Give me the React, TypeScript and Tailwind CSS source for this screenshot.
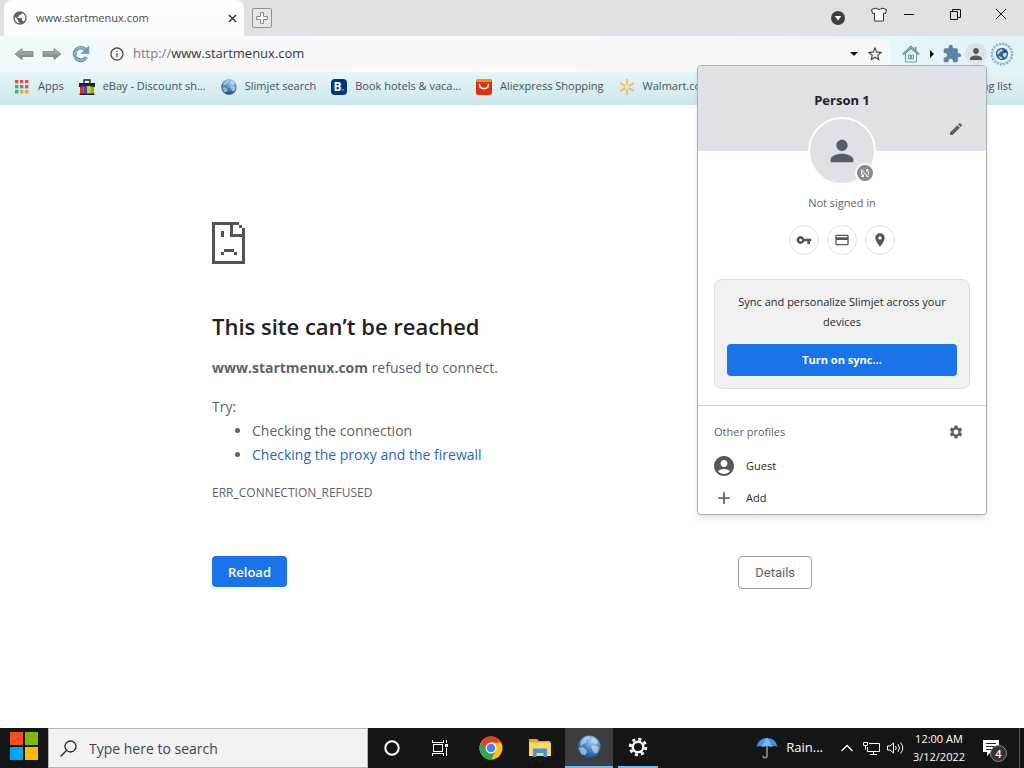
import React from "react";
import {
  MdPerson,
  MdEdit,
  MdVpnKey,
  MdCreditCard,
  MdPlace,
  MdSettings,
  MdAccountCircle,
  MdAdd,
  MdSyncDisabled,
  MdStarBorder,
  MdInfoOutline,
  MdExtension,
  MdPublic,
} from "react-icons/md";

function GlobeIcon({ className, id }: { className: string; id: string }) {
  return (
    <svg viewBox="0 0 24 24" className={className} aria-hidden="true">
      <defs>
        <radialGradient id={id} cx="0.65" cy="0.25" r="0.85">
          <stop offset="0" stopColor="#a9d3f3" />
          <stop offset="0.45" stopColor="#4c87c4" />
          <stop offset="1" stopColor="#123a75" />
        </radialGradient>
      </defs>
      <circle cx="12" cy="12" r="11.5" fill={`url(#${id})`} />
      <path
        d="M3.500 6.500l3.500-4 5-1.500 1 2.500-3.500 1.500-.5 3-3 1-2.500 3zM14 2.500l4 1 3.500 4.500-2.500 1-2.500-1-1.500-3zM1.500 13l4-1 3.500 2.500 1 3-2 2.500-3.500-.5zM14 11l4.500-.5 3.500 2-1.500 5-3 1-2-3z"
        fill="#d6ebf9"
        opacity="0.6"
      />
    </svg>
  );
}

function AppsIcon() {
  const colors = ["#e0533f", "#e0533f", "#e0533f", "#53a45f", "#4b87d9", "#e0533f", "#53a45f", "#e2a93b", "#e2a93b"];
  return (
    <svg viewBox="0 0 16 16" className="size-4 shrink-0" aria-hidden="true">
      {colors.map((c, i) => (
        <rect key={i} x={1 + (i % 3) * 5} y={1 + Math.floor(i / 3) * 5} width="3.400" height="3.400" fill={c} />
      ))}
    </svg>
  );
}

function EbayIcon() {
  return (
    <svg viewBox="0 0 16 16" className="size-4 shrink-0" aria-hidden="true">
      <path d="M5 4V1h6v3" fill="none" stroke="#222" strokeWidth="1.400" />
      <path d="M0 4h16v4H0z" fill="#222" />
      <path d="M1 8l3.500-1v8H1z" fill="#e12b2b" />
      <path d="M4.500 7H8v8H4.500z" fill="#2455c3" />
      <path d="M8 7h3.500v8H8z" fill="#f2b90d" />
      <path d="M11.500 7L15 8v7h-3.500z" fill="#7ab41d" />
      <path d="M.5 14.500h15V16H.5z" fill="#222" />
    </svg>
  );
}

function BookingIcon() {
  return (
    <span className="flex size-4 shrink-0 items-center justify-center rounded-sm bg-[#003580] text-[12px] leading-4 font-bold text-white">
      B<span className="text-[#2f9be8]">.</span>
    </span>
  );
}

function AliIcon() {
  return (
    <svg viewBox="0 0 16 16" className="size-4 shrink-0" aria-hidden="true">
      <rect width="16" height="16" rx="2.500" fill="#e62e04" />
      <path d="M0 2.500A2.500 2.500 0 012.500 0h11A2.500 2.500 0 0116 2.500V3H0z" fill="#f0921e" />
      <path d="M3.500 5.500c.5 5.500 8.500 5.500 9 0" fill="none" stroke="#fff" strokeWidth="1.600" strokeLinecap="round" />
    </svg>
  );
}

function WalmartIcon() {
  return (
    <svg viewBox="0 0 16 16" className="size-4 shrink-0" aria-hidden="true">
      <g stroke="#f3c261" strokeWidth="2.200" strokeLinecap="round">
        <path d="M8 1v4M8 11V15M2 4.500l3.700 2.100M10.300 9.400l3.700 2.100M2 11.500l3.700-2.100M10.300 6.600L14 4.500" />
      </g>
    </svg>
  );
}

function ArrowIcon({ flip, id }: { flip?: boolean; id: string }) {
  return (
    <svg viewBox="0 0 20 14" className="h-[14px] w-5" aria-hidden="true">
      <defs>
        <linearGradient id={id} x1="0" y1="0" x2="0" y2="1">
          <stop offset="0" stopColor="#b9bdbd" />
          <stop offset="1" stopColor="#777b7c" />
        </linearGradient>
      </defs>
      <path
        d={flip ? "M19 7l-7-5.500V4.500H1v5h11v3z" : "M1 7l7-5.500v3h11v5H8v3z"}
        fill={`url(#${id})`}
        stroke="#7d8182"
        strokeWidth="0.800"
      />
    </svg>
  );
}

function ReloadIcon() {
  return (
    <svg viewBox="0 0 18 18" className="size-[18px]" aria-hidden="true">
      <path d="M14.300 12.200A6.300 6.300 0 1 1 13 4.300" fill="none" stroke="#5e86ad" strokeWidth="3.600" />
      <path d="M14.300 12.200A6.300 6.300 0 1 1 13 4.300" fill="none" stroke="#8fb0cf" strokeWidth="1.800" />
      <path d="M16.800 1v7.500H9.300z" fill="#7296bb" stroke="#5e86ad" strokeWidth="0.600" />
    </svg>
  );
}

function HomeIcon() {
  return (
    <svg viewBox="0 0 18 18" className="size-[18px]" aria-hidden="true">
      <path d="M3.500 8.500L9 3.500l5.500 5V17h-11z" fill="#e3f3fb" stroke="#6b9abd" />
      <path d="M12.500 2h2v4l-2-2z" fill="#7c95a5" />
      <path d="M1 9.500L9 2l8 7.500" fill="none" stroke="#6a7c86" strokeWidth="2.200" />
      <path d="M1 9.500L9 2l8 7.500" fill="none" stroke="#b8ccd5" strokeWidth="0.700" />
      <path d="M6.500 10h2v4h-2zM9.500 10h2v4h-2z" fill="#c5e3f3" stroke="#5c88ab" strokeWidth="0.800" />
    </svg>
  );
}

function SlimjetGear() {
  return (
    <svg viewBox="0 0 24 24" className="size-6" aria-hidden="true">
      <circle cx="12" cy="12" r="10.500" fill="#d5ebf7" stroke="#7fadd0" strokeWidth="1.800" strokeDasharray="2 1.300" />
      <circle cx="12" cy="12" r="9.300" fill="#eef7fc" stroke="#86b1d1" strokeWidth="0.700" />
      <circle cx="12" cy="12" r="6.200" fill="#3c6694" />
      <path d="M8 9l3.500-2 1.500 1.500-3 1.500-1.500 2.500-1.500-.5zM13 11.500l3-1 1 2-2 3-2-1.500zM8.500 14l3 1 .5 2-2-.5z" fill="#c5deee" />
      <path d="M14.500 7.500L17 10l-3 .5z" fill="#1f446e" />
    </svg>
  );
}

function SadPage() {
  return (
    <svg viewBox="0 0 33 42" className="h-[42px] w-[33px]" shapeRendering="crispEdges" role="img" aria-label="Page unavailable">
      <path
        fill="#535353"
        d="M0 0h27v3H3v36h27V15H18V3h3v9h9V6h3v36H0zM27 3h3v3h-3zM9 9h3v6H9zM12 27h10v3h-10zM9 30h3v3H9zM22 30h3v3h-3z"
      />
    </svg>
  );
}

function ChromeIcon() {
  return (
    <svg viewBox="0 0 24 24" className="size-6" aria-hidden="true">
      <circle cx="12" cy="12" r="11.500" fill="#fbc116" />
      <path d="M2.040 6.250A11.500 11.500 0 0 0 12 23.500L16.800 14.800 12 12 7.300 14.800z" fill="#2da94f" />
      <path d="M2.040 6.250A11.500 11.500 0 0 1 21.960 6.250L21.900 6.500H12L7.200 15z" fill="#e33b2e" />
      <circle cx="12" cy="12" r="5.500" fill="#fff" />
      <circle cx="12" cy="12" r="4.300" fill="#4285f4" />
    </svg>
  );
}

function ExplorerIcon() {
  return (
    <svg viewBox="0 0 24 20" className="h-5 w-6" aria-hidden="true">
      <path d="M1 1h8l2 2h11v15H1z" fill="#e9a820" />
      <path d="M1 4.500h22V18H1z" fill="#fbd768" />
      <path d="M5 19v-8.500h14V19h-3.500v-4h-7v4z" fill="#3f97d3" />
    </svg>
  );
}

function UmbrellaIcon() {
  return (
    <svg viewBox="0 0 22 24" className="h-6 w-[22px]" aria-hidden="true">
      <path d="M11 10v9.500c0 3-4 3-4 .3" fill="none" stroke="#8b949c" strokeWidth="1.600" />
      <path d="M.5 11C1.500 5 6 2 11 2s9.500 3 10.500 9c-2-1.500-4.500-1.500-6 0-2.500-1.500-6.500-1.500-9 0-1.500-1.500-4-1.500-6 0z" fill="#3f93e0" />
      <path d="M6.500 11C7 7 9 3 11 2c2 1 4 5 4.500 9-2.500-1.500-6.500-1.500-9 0z" fill="#72b8f2" />
    </svg>
  );
}

const iconButton = "flex shrink-0 items-center justify-center";

function Bookmark({ icon, label }: { icon: React.ReactNode; label: string }) {
  return (
    <a href="#" className="flex shrink-0 items-center gap-2">
      {icon}
      {label}
    </a>
  );
}

function TabStrip() {
  return (
    <div className="flex h-9 items-center bg-[#dee1e6] pl-1">
      <div className="flex h-9 w-60 items-center rounded-t-lg bg-linear-to-b from-white to-[#f9fdfd] pr-1.5 pl-2">
        <MdPublic className="size-4 text-[#5f6368]" />
        <span className="ml-2 flex-1 text-[11px] text-[#45494d]">www.startmenux.com</span>
        <button aria-label="Close tab" className="flex size-3 items-center justify-center">
          <svg viewBox="0 0 10 10" className="size-[9px]" stroke="#333" strokeWidth="1.600">
            <path d="M1 1l8 8M9 1l-8 8" />
          </svg>
        </button>
      </div>
      <button aria-label="New tab" className="ml-2 flex size-5 items-center justify-center rounded-xs border border-[#909397] bg-[#e3e6ea]">
        <svg viewBox="0 0 14 14" className="size-[14px]">
          <path d="M5.500 1.500h3v4h4v3h-4v4h-3v-4h-4v-3h4z" fill="#fff" stroke="#85888c" />
        </svg>
      </button>
      <div className="flex-1" />
      <button aria-label="Search tabs" className={`${iconButton} size-4`}>
        <svg viewBox="0 0 14 14" className="size-[14px]">
          <circle cx="7" cy="7" r="7" fill="#3c4043" />
          <path d="M3.800 5h6.400L7 9.500z" fill="#fff" />
        </svg>
      </button>
      <button aria-label="Skins" className={`${iconButton} mb-2 ml-[25px] size-4`}>
        <svg viewBox="0 0 16 15" className="h-[15px] w-4">
          <path d="M5 1l-4.500 1.500 1 4 2-.5V14h9V6l2 .5 1-4L11 1c-.6 1.800-5.400 1.800-6 0z" fill="#fff" stroke="#333" />
        </svg>
      </button>
      <button aria-label="Minimize" className={`${iconButton} mb-2 -ml-px h-7 w-[46px]`}>
        <svg viewBox="0 0 10 10" className="size-[10px]" stroke="#111">
          <path d="M0 5.500h10" />
        </svg>
      </button>
      <button aria-label="Restore" className={`${iconButton} mb-2 h-7 w-[46px]`}>
        <svg viewBox="0 0 11 11" className="size-[11px]" fill="none" stroke="#111">
          <path d="M.5 2.500h7v8h-7zM2.500 2.500v-2h8v8h-3" />
        </svg>
      </button>
      <button aria-label="Close" className={`${iconButton} mb-2 h-7 w-[46px]`}>
        <svg viewBox="0 0 12 12" className="size-3" stroke="#111">
          <path d="M1 1l10 10M11 1L1 11" />
        </svg>
      </button>
    </div>
  );
}

function Toolbar() {
  return (
    <div className="flex h-9 items-center bg-linear-to-r from-[#effafc] via-[#fafdfd] to-[#dff3f7] pr-2.5 pl-3.5">
      <button aria-label="Back">
        <ArrowIcon id="arrow-back" />
      </button>
      <button aria-label="Forward" className="ml-2">
        <ArrowIcon id="arrow-forward" flip />
      </button>
      <button aria-label="Reload page" className="ml-2.5">
        <ReloadIcon />
      </button>
      <div className="ml-3 flex h-[30px] flex-1 items-center rounded-md bg-[#f7f8f8] pr-1.5 pl-[7px] text-[13px]">
        <MdInfoOutline className="size-4 text-[#4b4f53]" />
        <label htmlFor="address" className="ml-2 text-[#7a7d80]">
          http://
        </label>
        <input id="address" className="min-w-0 flex-1 bg-transparent text-[#34373a] outline-none" defaultValue="www.startmenux.com" />
        <button aria-label="Address history" className={`${iconButton} size-4`}>
          <svg viewBox="0 0 8 4" className="h-1 w-2">
            <path d="M0 0h8L4 4z" fill="#111" />
          </svg>
        </button>
        <button aria-label="Bookmark this page" className="ml-1">
          <MdStarBorder className="size-[18px] text-[#45494d]" />
        </button>
      </div>
      <button aria-label="Home" className="ml-3">
        <HomeIcon />
      </button>
      <button aria-label="Show more" className={`${iconButton} ml-1 size-4`}>
        <svg viewBox="0 0 4 8" className="h-2 w-1">
          <path d="M0 0v8l4-4z" fill="#111" />
        </svg>
      </button>
      <button aria-label="Extensions" className="ml-0.5">
        <MdExtension className="size-5 text-[#5d83aa]" />
      </button>
      <button aria-label="Profile" className="ml-[3px] flex size-[22px] items-center justify-center rounded-full bg-[#dce4e8]">
        <MdPerson className="size-[18px] text-[#525861]" />
      </button>
      <button aria-label="Slimjet menu" className="ml-[3px]">
        <SlimjetGear />
      </button>
    </div>
  );
}

function BookmarksBar() {
  return (
    <nav className="flex h-[33px] items-center justify-between overflow-hidden bg-linear-to-b from-[#e6f5f8] to-[#cde7ec] pr-3 pb-1 pl-3.5 text-[11px] whitespace-nowrap text-[#45525a]">
      <div className="flex min-w-0 items-center gap-[15px] overflow-hidden">
        <Bookmark icon={<AppsIcon />} label="Apps" />
        <Bookmark icon={<EbayIcon />} label="eBay - Discount sh..." />
        <Bookmark icon={<GlobeIcon id="globe-bookmark" className="size-4" />} label="Slimjet search" />
        <Bookmark icon={<BookingIcon />} label="Book hotels & vaca..." />
        <Bookmark icon={<AliIcon />} label="Aliexpress Shopping" />
        <Bookmark icon={<WalmartIcon />} label="Walmart.com" />
      </div>
      <a href="#">Reading list</a>
    </nav>
  );
}

function ErrorPage() {
  return (
    <main className="flex-1 bg-white">
      <div className="mx-auto max-w-[600px] pt-[117px] text-[14px] leading-6 text-[#5f6368]">
        <SadPage />
        <h1 className="mt-[46px] text-[22px] leading-8 font-semibold text-[#202124]">This site can’t be reached</h1>
        <p className="mt-3.5">
          <strong className="font-bold">www.startmenux.com</strong> refused to connect.
        </p>
        <p className="mt-[15px]">Try:</p>
        <ul className="list-disc pl-10">
          <li>Checking the connection</li>
          <li>
            <a href="#" className="text-[#2b67b8]">
              Checking the proxy and the firewall
            </a>
          </li>
        </ul>
        <p className="mt-4 text-[12px] leading-5">ERR_CONNECTION_REFUSED</p>
        <div className="mt-[53px] flex items-start justify-between">
          <button className="h-[31px] rounded-sm bg-[#1a73e8] px-4 text-[13px] font-semibold text-white">Reload</button>
          <button className="h-[33px] rounded-sm border border-[#9aa0a6] bg-white px-4 font-['Roboto',sans-serif] text-[13px]">Details</button>
        </div>
      </div>
    </main>
  );
}

function ProfileMenu() {
  const round = "flex size-[30px] items-center justify-center rounded-full border border-[#dfe0e2] bg-white text-[#54585c]";
  return (
    <section
      aria-label="Profile"
      className="absolute top-[65px] right-[37px] w-[290px] overflow-hidden rounded-sm border border-[#aeb0b3] bg-white text-[11px] leading-5 text-[#27292c] shadow-md"
    >
      <div className="relative h-[85px] bg-[#dee1e6] pt-6">
        <h2 className="text-center text-[13px] leading-5 font-bold text-[#202124]">Person 1</h2>
        <button aria-label="Edit profile" className="absolute right-[22px] bottom-3.5">
          <MdEdit className="size-4 text-[#5a5e62]" />
        </button>
      </div>
      <div className="relative mx-auto -mt-[34px] flex size-[68px] items-center justify-center rounded-full border-2 border-white bg-[#dee1e6]">
        <MdPerson className="size-[34px] text-[#555c6a]" />
        <span className="absolute -right-px bottom-0 flex size-5 items-center justify-center rounded-full border-2 border-white bg-[#868b90]">
          <MdSyncDisabled className="size-3 text-white" />
        </span>
      </div>
      <p className="mt-2 text-center text-[#5f6368]">Not signed in</p>
      <div className="mt-3 flex justify-center gap-2">
        <button aria-label="Passwords" className={round}>
          <MdVpnKey className="size-4" />
        </button>
        <button aria-label="Payment methods" className={round}>
          <MdCreditCard className="size-4" />
        </button>
        <button aria-label="Addresses" className={round}>
          <MdPlace className="size-4" />
        </button>
      </div>
      <div className="mx-4 mt-6 rounded-lg border border-[#dcdee0] bg-[#f1f1f2] p-3 text-center">
        <p className="px-1">Sync and personalize Slimjet across your devices</p>
        <button className="mt-3 h-8 w-full rounded-sm bg-[#1a73e8] font-bold text-white">Turn on sync...</button>
      </div>
      <div className="mt-4 flex items-center justify-between border-t border-[#cfd1d4] pt-4 pr-[22px] pl-4 text-[#5f6368]">
        <span>Other profiles</span>
        <button aria-label="Manage profiles">
          <MdSettings className="size-4" />
        </button>
      </div>
      <ul className="mt-2">
        <li>
          <button className="flex h-8 w-full items-center gap-2.5 px-3.5">
            <MdAccountCircle className="size-6 text-[#54585c]" />
            Guest
          </button>
        </li>
        <li>
          <button className="flex h-8 w-full items-center gap-3 px-4">
            <MdAdd className="size-5 text-[#54585c]" />
            Add
          </button>
        </li>
      </ul>
    </section>
  );
}

function Taskbar() {
  const task = "flex h-10 w-12 items-center justify-center";
  return (
    <footer className="flex h-10 items-stretch bg-[#151515] text-white">
      <button aria-label="Start" className="flex w-12 items-center justify-center">
        <svg viewBox="0 0 28 28" className="mb-1 size-7">
          <path d="M0 0h13v13H0z" fill="#f25022" />
          <path d="M15 0h13v13H15z" fill="#7fba00" />
          <path d="M0 15h13v13H0z" fill="#00a4ef" />
          <path d="M15 15h13v13H15z" fill="#ffb900" />
        </svg>
      </button>
      <label className="flex w-80 items-center gap-3 border border-[#b4b4b4] bg-[#f2f2f2] pl-[11px]">
        <svg viewBox="0 0 17 17" className="size-[17px]" fill="none" stroke="#222" strokeWidth="1.300">
          <circle cx="10.500" cy="6.500" r="5.500" />
          <path d="M6.500 10.500l-6 6" />
        </svg>
        <input
          aria-label="Search"
          placeholder="Type here to search"
          className="min-w-0 flex-1 bg-transparent text-[14px] outline-none placeholder:text-[#444]"
        />
      </label>
      <button aria-label="Cortana" className={task}>
        <svg viewBox="0 0 16 16" className="size-4">
          <circle cx="8" cy="8" r="6.700" fill="none" stroke="#fff" strokeWidth="2" />
        </svg>
      </button>
      <button aria-label="Task view" className={task}>
        <svg viewBox="0 0 17 16" className="h-4 w-[17px]" fill="none" stroke="#fff" shapeRendering="crispEdges">
          <path d="M1.500 4.500h9v7h-9zM.5 0v2.500h11V0M.5 16v-2.500h11V16M14.500 0v3M14.500 8v8" />
          <path d="M13 4h3v3h-3z" fill="#fff" stroke="none" />
        </svg>
      </button>
      <div className="ml-[3px] flex gap-px">
        <button aria-label="Chrome" className={task}>
          <ChromeIcon />
        </button>
        <button aria-label="File Explorer" className={task}>
          <ExplorerIcon />
        </button>
        <button aria-label="Slimjet" className={`${task} border-b-2 border-[#76b9ed] bg-[#3c3f42]`}>
          <GlobeIcon id="globe-task" className="size-6" />
        </button>
        <button aria-label="Settings" className={`${task} flex-col`}>
          <span className="flex w-10 flex-1 items-center justify-center border-b-2 border-[#76b9ed]">
            <svg viewBox="0 0 20 20" className="size-5" fill="none" stroke="#fff">
              <circle cx="10" cy="10" r="5.300" strokeWidth="2.400" />
              <circle cx="10" cy="10" r="7.800" strokeWidth="2.800" strokeDasharray="3.060 3.066" />
            </svg>
          </span>
        </button>
      </div>
      <div className="ml-auto flex items-center">
        <button className="flex items-center gap-2 text-[13px]">
          <UmbrellaIcon />
          Rain...
        </button>
        <button aria-label="Show hidden icons" className="ml-[18px]">
          <svg viewBox="0 0 12 8" className="h-2 w-3" fill="none" stroke="#fff" strokeWidth="1.300">
            <path d="M.5 7L6 1.500 11.500 7" />
          </svg>
        </button>
        <button aria-label="Network" className="ml-2.5">
          <svg viewBox="0 0 17 15" className="h-[15px] w-[17px]" fill="none" stroke="#fff">
            <path d="M6 2.500h10.500v8H4.500V6M10.500 10.500v3M7 13.500h7" />
            <path d="M.5 1.500h4v3h-4zM2.500 4.500v4" />
          </svg>
        </button>
        <button aria-label="Volume" className="ml-[7px]">
          <svg viewBox="0 0 17 14" className="h-[14px] w-[17px]" fill="none" stroke="#fff">
            <path d="M.5 5v4h2.500l3.500 3V2L3 5zM8.500 5q1.500 2 0 4M11 3.200q3 3.800 0 7.600M13.500 1.500q4.500 5.500 0 11" />
          </svg>
        </button>
        <button className="ml-2 w-[54px] text-center text-[11px] leading-[18px] whitespace-nowrap">
          <span className="block">12:00 AM</span>
          <span className="block">3/12/2022</span>
        </button>
        <button aria-label="4 notifications" className="relative ml-4 h-7 w-[25px]">
          <svg viewBox="0 0 18 18" className="size-[18px]">
            <path d="M1 1h16v12h-8l-4 4v-4H1z" fill="#fff" />
            <path d="M4 4.500h10M4 7.500h10M4 10.500h6" stroke="#222" />
          </svg>
          <span className="absolute right-0 bottom-0 flex size-[17px] items-center justify-center rounded-full border border-[#8c8c8c] bg-[#333] text-[11px] leading-none font-semibold">
            4
          </span>
        </button>
        <span className="mr-1 ml-3 h-10 w-px bg-[#555]" />
      </div>
    </footer>
  );
}

export default function App() {
  return (
    <div className="relative flex min-h-screen flex-col bg-white font-['Open_Sans','Noto_Sans',sans-serif]">
      <header>
        <TabStrip />
        <Toolbar />
        <BookmarksBar />
      </header>
      <ErrorPage />
      <Taskbar />
      <ProfileMenu />
    </div>
  );
}
